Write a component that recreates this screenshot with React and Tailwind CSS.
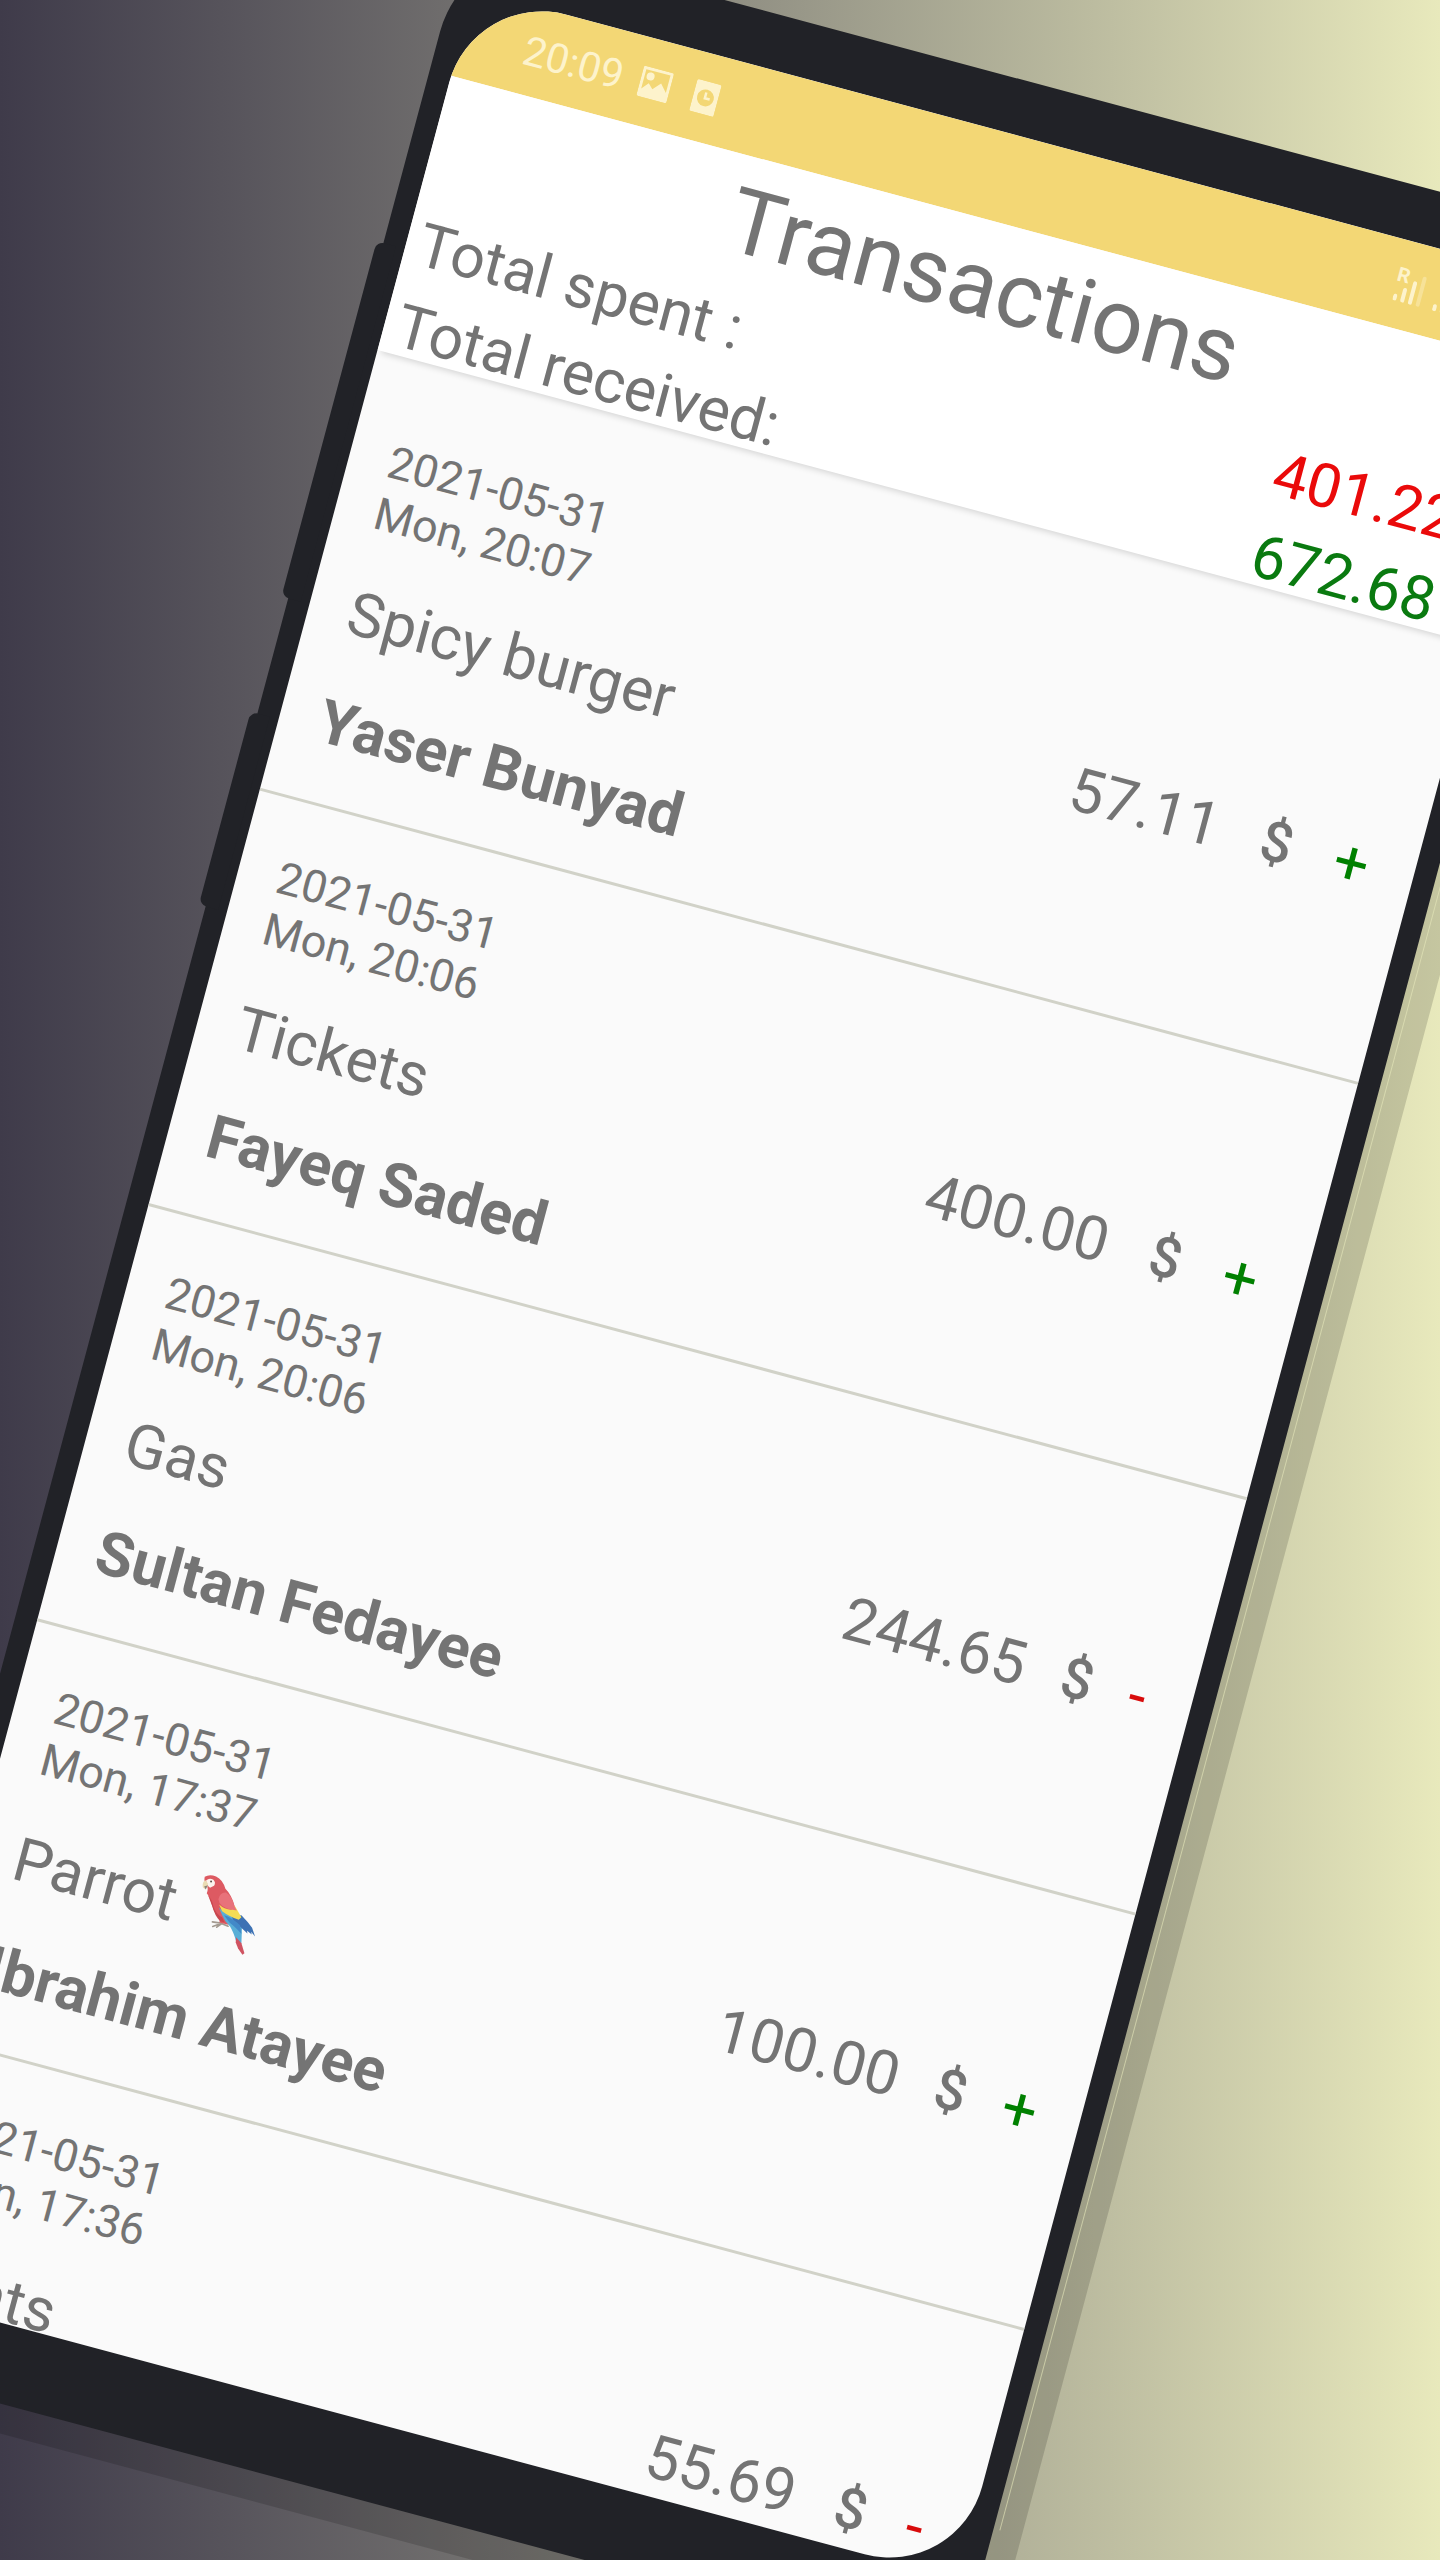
const transactions = [
  { date: "2021-05-31", time: "Mon, 20:07", item: "Spicy burger", name: "Yaser Bunyad", amount: "57.11", incoming: true, spacing: "gap-11 pr-[46px]" },
  { date: "2021-05-31", time: "Mon, 20:06", item: "Tickets", name: "Fayeq Saded", amount: "400.00", incoming: true, spacing: "gap-11 pr-[46px]" },
  { date: "2021-05-31", time: "Mon, 20:06", item: "Gas", name: "Sultan Fedayee", amount: "244.65", incoming: false, spacing: "gap-[38px] pr-[46px]" },
  { date: "2021-05-31", time: "Mon, 17:37", item: "Parrot", parrot: true, name: "Ibrahim Atayee", amount: "100.00", incoming: true, spacing: "gap-[38px] pr-11" },
  { date: "2021-05-31", time: "Mon, 17:36", item: "Pants", amount: "55.69", incoming: false, spacing: "gap-[42px] pr-[46px]" },
];

function PictureIcon() {
  return (
    <svg viewBox="0 0 31 31" className="size-[31px]" aria-hidden="true">
      <path
        fill="currentColor"
        fillRule="evenodd"
        d="M0 2Q0 0 2 0H29Q31 0 31 2V29Q31 31 29 31H2Q0 31 0 29ZM3 3V23L9 16L14 21L21 13L28 21V3Z"
      />
      <circle cx="9" cy="9" r="4" fill="currentColor" />
    </svg>
  );
}

function ClockCardIcon() {
  return (
    <svg viewBox="0 0 25 33" className="h-[33px] w-[25px]" aria-hidden="true">
      <rect width="25" height="33" rx="2" fill="currentColor" />
      <circle cx="12.5" cy="16.5" r="8.5" fill="#f3d775" />
      <path d="M12 11V17H17" fill="none" stroke="currentColor" strokeWidth="2.5" />
    </svg>
  );
}

function SignalIcon() {
  return (
    <svg viewBox="0 0 30 34" className="h-[34px] w-[30px]" aria-hidden="true" fill="currentColor">
      <rect x="0" y="27" width="4" height="7" rx="2" />
      <rect x="8" y="19" width="4" height="15" rx="2" />
      <rect x="16" y="10" width="4" height="24" rx="2" />
      <rect x="24" y="3" width="4" height="31" rx="2" opacity="0.4" />
    </svg>
  );
}

function ParrotIcon() {
  return (
    <svg viewBox="0 0 72 72" className="size-[72px] overflow-visible" role="img" aria-label="parrot emoji">
      <g transform="rotate(-15 36 36) translate(36 36) scale(0.3333) translate(-141 -315)">
        <path fill="none" stroke="#a39a90" strokeWidth="5" strokeLinecap="round" d="M93 336L118 340L140 349M94 350L118 341M106 352L120 342" />
        <path fill="#dd5a62" d="M70 201Q84 192 104 200Q124 209 132 237Q150 254 160 290L168 320L140 345L114 338L116 326Q100 314 91 283Q86 262 76 250Q82 238 76 226Q66 216 70 201Z" />
        <path fill="#c9474f" d="M80 256Q92 268 96 290Q104 314 122 322L130 338L116 334Q100 318 92 288Z" />
        <path fill="#58aed6" d="M112 292Q130 314 160 322L182 344L180 400L164 394Q156 366 146 350L132 334Q122 318 112 292Z" />
        <path fill="#3d72b4" d="M150 318L180 316Q200 336 212 354L221 380L209 366L211 374L197 363L198 371L178 352L156 332Z" />
        <path fill="#4289c8" d="M128 316Q150 322 176 346L180 372Q160 350 144 338Z" />
        <path fill="#f4dc55" d="M113 284Q128 298 150 300L160 288L180 322L172 330Q140 318 122 304Z" />
        <path fill="#e8727a" d="M111 268Q116 246 134 248Q152 260 158 286L166 302Q138 300 122 288Q112 280 111 268Z" />
        <path fill="#cf5361" d="M164 382L180 400L189 430L183 435L170 416L163 398Z" />
        <path fill="#fbf4ee" d="M74 212Q84 202 96 210Q104 218 98 228L86 234Q76 228 74 212Z" />
        <path fill="#eadcb4" d="M72 211Q62 216 64 232L71 238Q80 232 80 222Z" />
        <path fill="#8c8377" d="M68 230L79 226L73 239Z" />
        <circle cx="89" cy="215" r="3" fill="#5e5550" />
      </g>
    </svg>
  );
}

function Transaction({ date, time, item, parrot, name, amount, incoming, spacing }) {
  return (
    <li className="flex min-h-[430px] justify-between border-b-[3px] border-[#d1d2c8] pt-[52px] pb-[45px] pl-10">
      <div className="flex flex-col gap-10">
        <p className="text-[45px] leading-[53px]">
          {date}
          <br />
          {time}
        </p>
        <p className="flex items-center gap-[18px] text-[61px] leading-[72px]">
          {item}
          {parrot && <ParrotIcon />}
        </p>
        {name && <p className="text-[61px] leading-[72px] font-bold">{name}</p>}
      </div>
      <p className={`flex items-center self-center text-[61px] leading-[72px] ${spacing}`}>
        <span>{amount}</span>
        <span className="text-[56px] font-medium">$</span>
        {incoming ? (
          <span className="text-[#008000]">+</span>
        ) : (
          <span className="text-[#d80b0b]">-</span>
        )}
      </p>
    </li>
  );
}

export default function App() {
  return (
    <main className="flex h-screen items-start overflow-hidden bg-linear-to-r from-[#3f3b4a] to-[#e8e9bc] font-['Roboto',sans-serif] text-[#747474]">
      <div className="relative -mt-[69px] ml-[32.4%] flex aspect-[1181/2509] w-[82%] shrink-0 origin-top-left rotate-15 flex-col rounded-[104px] bg-[#212227] px-[22px] pt-[55px] pb-[78px] shadow-[29px_29px_0_rgba(0,0,0,0.15)]">
        <span className="absolute top-[323px] -left-[7px] h-[368px] w-5 rounded-l-lg bg-[#212227]" />
        <span className="absolute top-[810px] -left-[7px] h-[200px] w-5 rounded-l-lg bg-[#212227]" />
        <span className="absolute top-[104px] -right-[7px] bottom-[136px] w-px bg-[#e8e9bc]/60" />
        <section className="flex min-h-0 flex-1 flex-col overflow-hidden rounded-[96px] bg-[#fafafa]">
          <div className="flex h-[89px] shrink-0 items-center bg-[#f3d775] pr-[99px] pl-16 text-[#fdf3cc]">
            <span className="text-[41px] leading-[48px]">20:09</span>
            <span className="ml-[18px]">
              <PictureIcon />
            </span>
            <span className="ml-[24px]">
              <ClockCardIcon />
            </span>
            <span className="relative ml-auto flex gap-[11px]">
              <span className="absolute -top-[2px] -left-px text-[20px] leading-[18px] font-bold">R</span>
              <SignalIcon />
              <SignalIcon />
            </span>
          </div>
          <header className="relative shrink-0 bg-white pt-[10px] pr-[51px] pl-[13px] shadow-[0_6px_6px_-4px_rgba(0,0,0,0.15)]">
            <h1 className="-mr-10 text-center text-[91px] leading-[110px]">Transactions</h1>
            <dl className="mt-2 text-[61px] leading-[84px]">
              <div className="flex justify-between">
                <dt>Total spent :</dt>
                <dd className="text-[#ea0a0a]">401.22</dd>
              </div>
              <div className="flex h-[72px] justify-between">
                <dt>Total received:</dt>
                <dd className="text-[#0a7a10]">672.68</dd>
              </div>
            </dl>
          </header>
          <ul className="pt-[26px]">
            {transactions.map((t) => (
              <Transaction key={t.item} {...t} />
            ))}
          </ul>
        </section>
      </div>
    </main>
  );
}
